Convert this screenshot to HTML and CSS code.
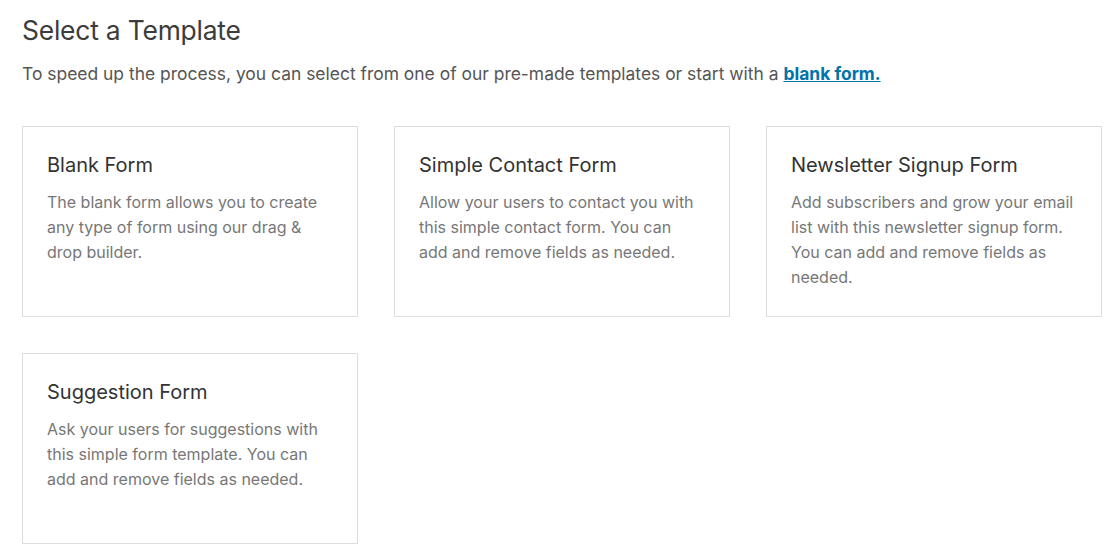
FILE: index.html
```html
<!DOCTYPE html>
<html>
<head>
<meta charset="utf-8">
<link rel="stylesheet" href="styles.css">
</head>
<body>
<div class="page">
  <h1 class="title">Select a Template</h1>
  <p class="intro">To speed up the process, you can select from one of our pre-made templates or start with a <a href="#" class="blank-link">blank form.</a></p>
  <div class="grid">
    <div class="card">
      <h3 class="card-title">Blank Form</h3>
      <p class="card-text">The blank form allows you to create any type of form using our drag &amp; drop builder.</p>
    </div>
    <div class="card">
      <h3 class="card-title">Simple Contact Form</h3>
      <p class="card-text">Allow your users to contact you with this simple contact form. You can add and remove fields as needed.</p>
    </div>
    <div class="card">
      <h3 class="card-title">Newsletter Signup Form</h3>
      <p class="card-text">Add subscribers and grow your email list with this newsletter signup form. You can add and remove fields as needed.</p>
    </div>
    <div class="card">
      <h3 class="card-title">Suggestion Form</h3>
      <p class="card-text">Ask your users for suggestions with this simple form template. You can add and remove fields as needed.</p>
    </div>
  </div>
</div>
</body>
</html>
```
FILE: styles.css
```css
html, body {
  margin: 0;
  padding: 0;
  background: #fff;
}
body {
  font-family: Inter, "Noto Sans", Roboto, sans-serif;
  color: #444;
}
.page {
  padding: 14px 15px 0 22px;
}
.title {
  margin: 0;
  font-size: 26.4px;
  font-weight: 400;
  line-height: 32px;
  color: #3c3c3c;
  letter-spacing: -0.2px;
}
.intro {
  margin: 16px 0 0;
  font-size: 17.45px;
  line-height: 24px;
  color: #555;
}
.blank-link {
  color: #0073aa;
  font-weight: 700;
  text-decoration: underline;
}
.grid {
  display: grid;
  grid-template-columns: repeat(3, 336px);
  column-gap: 36px;
  row-gap: 36px;
  margin-top: 40px;
}
.card {
  border: 1px solid #ddd;
  height: 191px;
  box-sizing: border-box;
  padding: 24px 27px 0 24px;
}
.card-title {
  margin: 0;
  font-size: 20px;
  font-weight: 400;
  line-height: 28px;
  color: #333;
}
.card-text {
  margin: 11px 0 0;
  font-size: 16px;
  line-height: 25px;
  color: #777;
}
```
